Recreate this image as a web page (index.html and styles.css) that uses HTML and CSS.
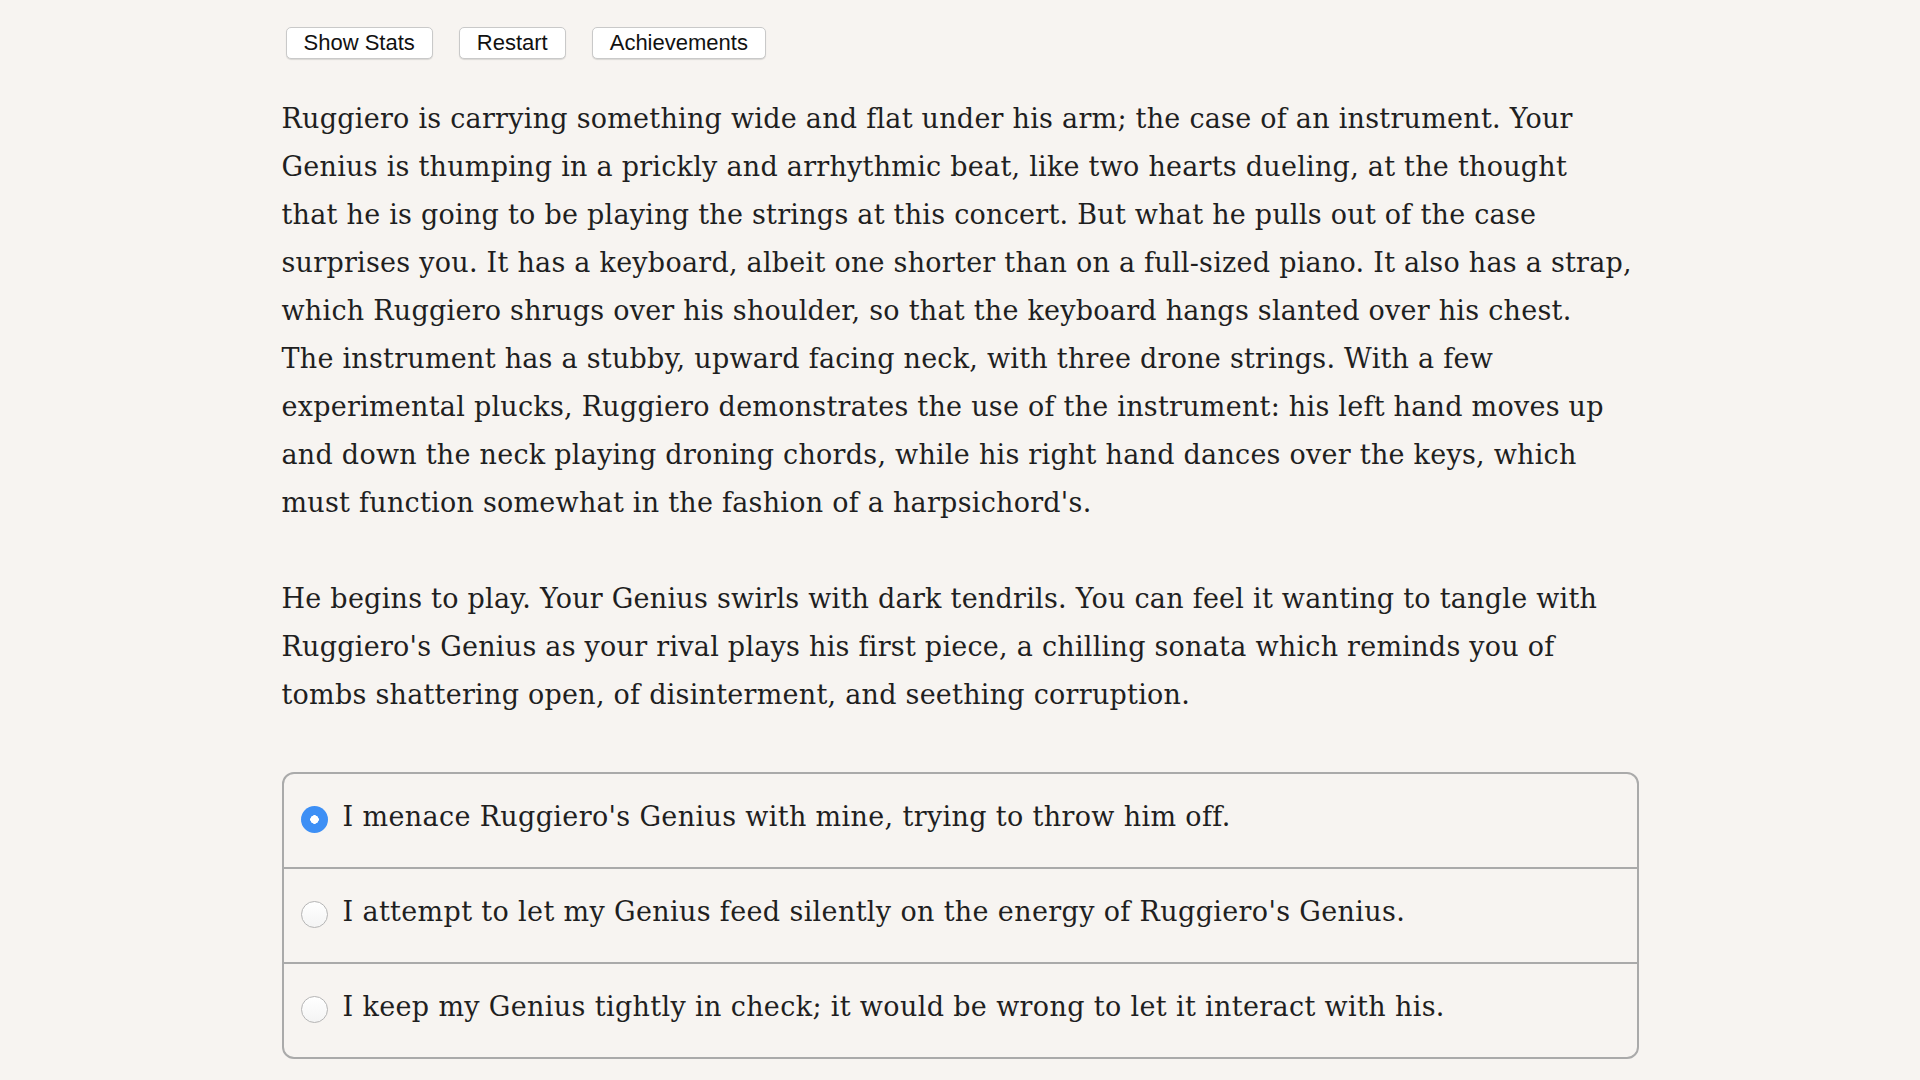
FILE: index.html
```html
<!DOCTYPE html>
<html>
<head>
<meta charset="utf-8">
<link rel="stylesheet" href="styles.css">
</head>
<body>
<main class="page">
  <nav class="toolbar">
    <button class="btn">Show Stats</button>
    <button class="btn">Restart</button>
    <button class="btn">Achievements</button>
  </nav>
  <p class="story">Ruggiero is carrying something wide and flat under his arm; the case of an instrument. Your Genius is thumping in a prickly and arrhythmic beat, like two hearts dueling, at the thought that&nbsp;he is going to be playing the strings at this concert. But what he pulls out of the case surprises you. It has a keyboard, albeit one shorter than on a full-sized piano. It also has a strap, which Ruggiero shrugs over his shoulder, so that the keyboard hangs slanted over his chest. The&nbsp;instrument has a stubby, upward facing neck, with three drone strings. With a few experimental plucks, Ruggiero demonstrates the use of the instrument: his left hand moves up and down the neck playing droning chords, while his right hand dances over the keys, which must function somewhat in the fashion of a harpsichord's.</p>
  <p class="story">He begins to play. Your Genius swirls with dark tendrils. You can feel it wanting to tangle with Ruggiero's Genius as your rival plays his first piece, a chilling sonata which reminds you of tombs shattering open, of disinterment, and seething corruption.</p>
  <ul class="choices">
    <li class="choice"><span class="radio checked"></span><span class="choice-text">I menace Ruggiero's Genius with mine, trying to throw him off.</span></li>
    <li class="choice"><span class="radio"></span><span class="choice-text">I attempt to let my Genius feed silently on the energy of Ruggiero's Genius.</span></li>
    <li class="choice"><span class="radio"></span><span class="choice-text">I keep my Genius tightly in check; it would be wrong to let it interact with his.</span></li>
  </ul>
</main>
</body>
</html>
```

FILE: styles.css
```css
html, body {
  margin: 0;
  padding: 0;
  background: #f7f4f1;
}
body {
  font-family: "DejaVu Serif", "Liberation Serif", serif;
  color: #1f1f1f;
}
.page {
  width: 1357px;
  margin: 0 auto;
  padding-top: 27px;
}
.toolbar {
  display: flex;
  gap: 26px;
  padding-left: 4px;
}
.btn {
  height: 32px;
  padding: 0 17px;
  font-family: "Liberation Sans", Arial, sans-serif;
  font-size: 22px;
  color: #111;
  background: #fff;
  border: 1px solid #c9c9c9;
  border-radius: 5px;
  box-shadow: 0 1px 1px rgba(0,0,0,0.12);
}
.story {
  margin: 36px 0 0 0;
  font-size: 27px;
  letter-spacing: 0.25px;
  line-height: 48px;
}
.story + .story {
  margin-top: 48px;
}
.choices {
  list-style: none;
  margin: 53px 0 0 0;
  padding: 0;
  border: 2px solid #aaa;
  border-radius: 12px;
}
.choice {
  height: 93px;
  box-sizing: border-box;
  display: flex;
  align-items: center;
  padding: 0 0 8px 17px;
  font-size: 27px;
  letter-spacing: 0.35px;
}
.choice + .choice {
  height: 95px;
  border-top: 2px solid #aaa;
}
.radio {
  width: 25px;
  height: 25px;
  border-radius: 50%;
  border: 1px solid #b5b5b5;
  background: linear-gradient(#fff, #f4f4f4);
  flex: none;
  margin-right: 15px;
  margin-top: 6px;
}
.radio.checked {
  width: 27px;
  height: 27px;
  border: none;
  background: radial-gradient(circle, #fff 0 4px, #3d8ff5 4.5px);
}
.choice-text {
  white-space: nowrap;
}
```
